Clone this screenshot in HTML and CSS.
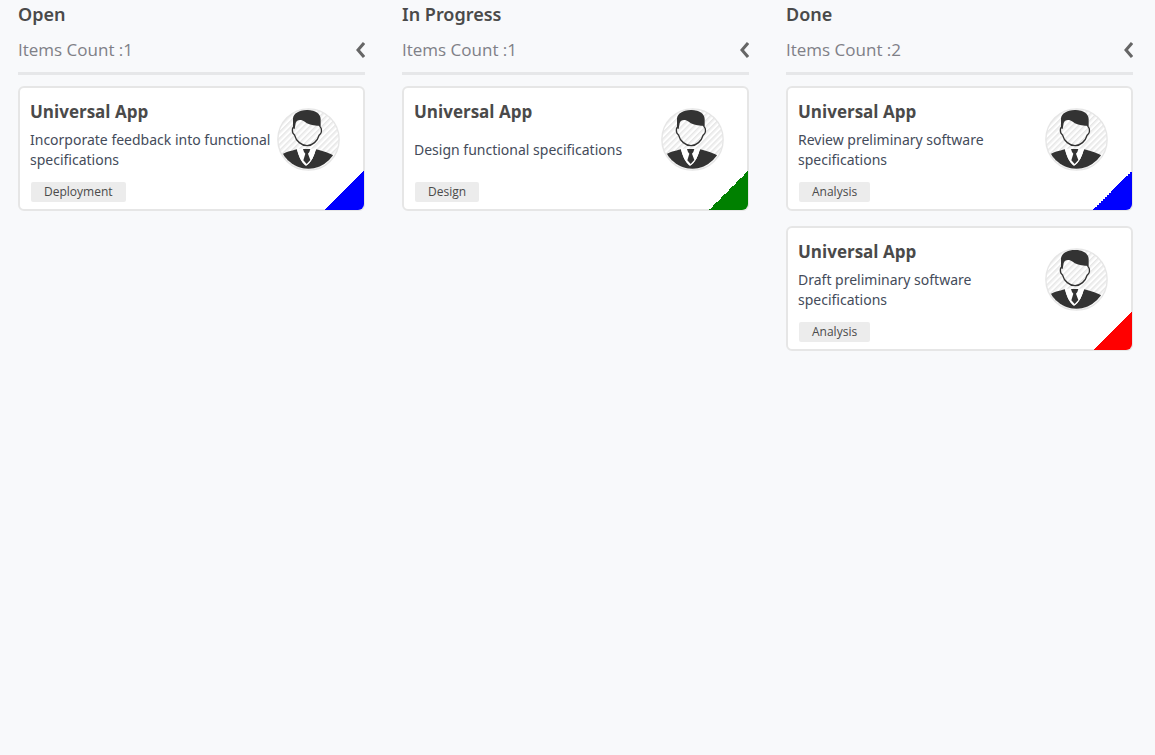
FILE: index.html
```html
<!DOCTYPE html>
<html lang="en">
<head>
<meta charset="utf-8">
<title>Kanban Board</title>
<link rel="stylesheet" href="styles.css">
</head>
<body>
<svg class="defs" aria-hidden="true">
  <defs>
    <pattern id="hatch" width="13" height="13" patternUnits="userSpaceOnUse" patternTransform="rotate(45)">
      <rect width="13" height="13" fill="#fff"/>
      <rect width="2" height="13" fill="#dedede"/>
      <rect x="4" width="2" height="13" fill="#dedede"/>
    </pattern>
    <clipPath id="disc"><circle cx="100" cy="103" r="88"/></clipPath>
    <symbol id="person" viewBox="6 9 189 189">
      <circle cx="100.500" cy="103.500" r="92" fill="url(#hatch)" stroke="#e6e6e6" stroke-width="4"/>
      <path d="M57 66C52 67 51 74 53 82C54 87 58 88 59 91C63 108 80 122 96 122C112 122 128 108 132 91C134 88 138 87 139 81C140 74 139 68 135 66" fill="none" stroke="#333" stroke-width="4"/>
      <path d="M54 70V40C56 25 73 14 98 15C121 15 136 26 137 42V70L131 62C115 63 99 59 87 49C78 43 65 43 62 54L59 72Z" fill="#333"/>
      <g clip-path="url(#disc)">
        <path d="M15 152C32 140 48 138 66 133C70 150 78 173 93 182C108 175 118 152 122 133C142 138 162 142 182 156V200H15Z" fill="#333"/>
      </g>
      <path d="M66 133C70 150 78 173 93 182C108 175 118 152 122 133L116 130C112 150 106 167 95 176C84 168 76 150 72 130Z" fill="#fff"/>
      <path d="M66 131H124L112 160L95 179L78 162Z" fill="#fff"/>
      <path d="M84 132H106L103 141L99 146L106 165L95 177L85 166L91 146L87 141Z" fill="#333"/>
    </symbol>
    <symbol id="chevron" viewBox="0 0 10 18">
      <path d="M9 2L3 9L9 16" fill="none" stroke="#666" stroke-width="3"/>
    </symbol>
  </defs>
</svg>
<main class="board">
  <section class="column">
    <header class="column-header">
      <h2 class="column-title">Open</h2>
      <div class="column-meta">
        <span class="count">Items Count :1</span>
        <button class="collapse" type="button" aria-label="Collapse Open"><svg class="chevron"><use href="#chevron"/></svg></button>
      </div>
    </header>
    <article class="card">
      <div class="card-body">
        <h3 class="card-title">Universal App</h3>
        <p class="card-text">Incorporate feedback into functional specifications</p>
        <span class="tag">Deployment</span>
      </div>
      <svg class="avatar" role="img" aria-label="Assignee"><use href="#person"/></svg>
      <span class="corner blue"></span>
    </article>
  </section>
  <section class="column">
    <header class="column-header">
      <h2 class="column-title">In Progress</h2>
      <div class="column-meta">
        <span class="count">Items Count :1</span>
        <button class="collapse" type="button" aria-label="Collapse In Progress"><svg class="chevron"><use href="#chevron"/></svg></button>
      </div>
    </header>
    <article class="card">
      <div class="card-body">
        <h3 class="card-title">Universal App</h3>
        <p class="card-text">Design functional specifications</p>
        <span class="tag">Design</span>
      </div>
      <svg class="avatar" role="img" aria-label="Assignee"><use href="#person"/></svg>
      <span class="corner green"></span>
    </article>
  </section>
  <section class="column">
    <header class="column-header">
      <h2 class="column-title">Done</h2>
      <div class="column-meta">
        <span class="count">Items Count :2</span>
        <button class="collapse" type="button" aria-label="Collapse Done"><svg class="chevron"><use href="#chevron"/></svg></button>
      </div>
    </header>
    <article class="card">
      <div class="card-body">
        <h3 class="card-title">Universal App</h3>
        <p class="card-text">Review preliminary software specifications</p>
        <span class="tag">Analysis</span>
      </div>
      <svg class="avatar" role="img" aria-label="Assignee"><use href="#person"/></svg>
      <span class="corner blue"></span>
    </article>
    <article class="card">
      <div class="card-body">
        <h3 class="card-title">Universal App</h3>
        <p class="card-text">Draft preliminary software specifications</p>
        <span class="tag">Analysis</span>
      </div>
      <svg class="avatar" role="img" aria-label="Assignee"><use href="#person"/></svg>
      <span class="corner red"></span>
    </article>
  </section>
</main>
</body>
</html>
```
FILE: styles.css
```css
* {
  box-sizing: border-box;
}

body {
  margin: 0;
  background: #f8f9fb;
  color: #4a4a4a;
  font-family: "Noto Sans", "Open Sans", sans-serif;
}

h2, h3, p {
  margin: 0;
}

.defs {
  position: absolute;
  width: 0;
  height: 0;
}

.board {
  display: grid;
  grid-template-columns: repeat(3, 1fr);
  gap: 37px;
  padding: 0 22px 0 18px;
}

.column {
  display: flex;
  flex-direction: column;
  gap: 15px;
  min-width: 0;
}

.column-header {
  border-bottom: 3px solid #e6e7e9;
  margin-bottom: -4px;
}

.column-title {
  font-size: 18px;
  font-weight: 600;
  line-height: 28px;
}

.column-meta {
  display: flex;
  align-items: center;
  justify-content: space-between;
  height: 44px;
}

.count,
.card-title,
.tag {
  font-family: "Open Sans", "Noto Sans", sans-serif;
}

.count {
  color: #7f8087;
  font-size: 17px;
  line-height: 24px;
}

.collapse {
  display: flex;
  padding: 0;
  border: 0;
  background: none;
  cursor: pointer;
}

.chevron {
  width: 10px;
  height: 18px;
}

.card {
  position: relative;
  display: flex;
  align-items: flex-start;
  justify-content: space-between;
  padding: 12px 23px 7px 10px;
  border: 2px solid #e6e6e6;
  border-radius: 6px;
  background: #fff;
}

.card-body {
  display: flex;
  flex: 1;
  flex-direction: column;
  align-items: flex-start;
  max-width: 246px;
}

.card-title {
  font-size: 17px;
  font-weight: 700;
  line-height: 24px;
}

.card-text {
  display: flex;
  align-items: center;
  min-height: 52px;
  padding: 6px 0;
  margin-bottom: 6px;
  color: #444b5a;
  font-size: 14px;
  line-height: 20px;
}

.tag {
  margin-left: 1px;
  padding: 0 13px;
  border-radius: 2px;
  background: #ececec;
  font-size: 12px;
  line-height: 20px;
}

.avatar {
  flex: none;
  width: 63px;
  height: 63px;
  margin-top: 8px;
}

.corner {
  position: absolute;
  right: -1px;
  bottom: -1px;
  width: 39px;
  height: 39px;
  border-bottom-right-radius: 6px;
}

.blue {
  background: linear-gradient(135deg, transparent 50%, #00f 50%);
}

.green {
  background: linear-gradient(135deg, transparent 50%, #008000 50%);
}

.red {
  background: linear-gradient(135deg, transparent 50%, #f00 50%);
}
```
